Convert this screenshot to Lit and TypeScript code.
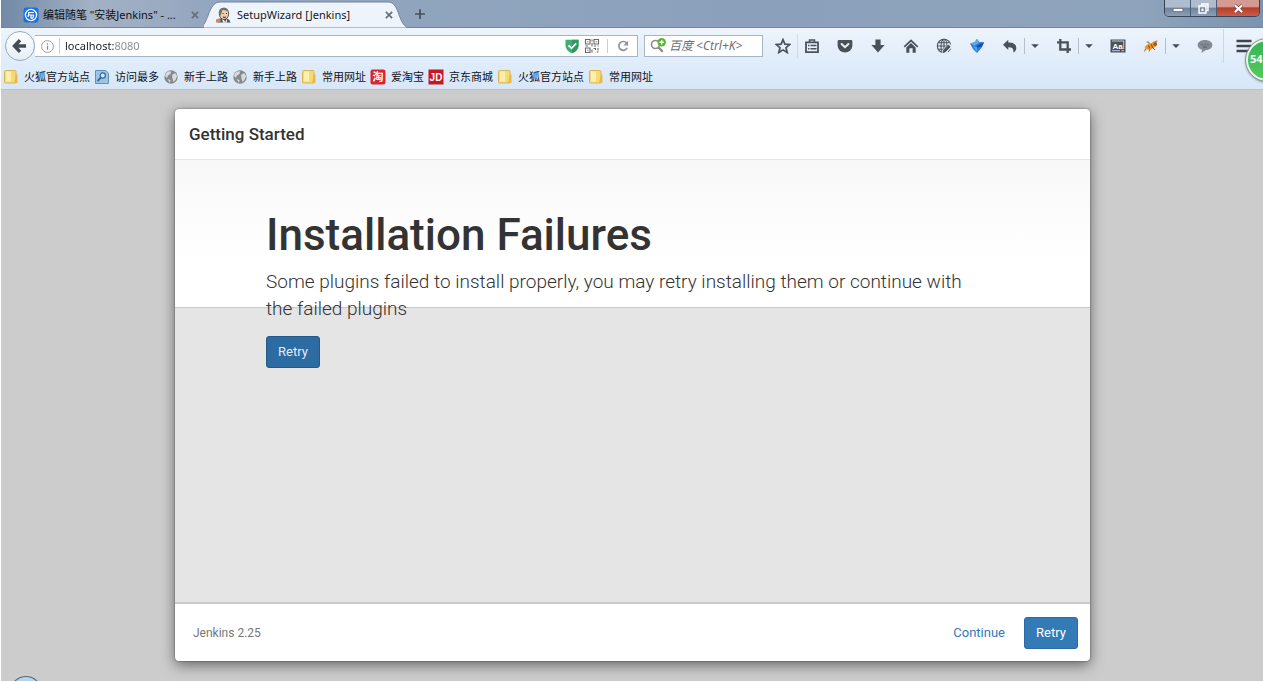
import { LitElement, html, css, svg, TemplateResult } from "lit";
import { customElement } from "lit/decorators.js";

type IconName =
  | "back" | "info" | "shieldCheck" | "qr" | "reload" | "searchAdd" | "star" | "list" | "pocket"
  | "download" | "home" | "globeEdit" | "swirl" | "undo" | "crop" | "reader" | "bee" | "chat"
  | "menu" | "caret" | "folder" | "mostVisited" | "globe" | "taobao" | "jd" | "blog" | "jenkins"
  | "close" | "plus" | "minimize" | "restore" | "winClose";

const ink = "#4b5158";

const shapes: Record<IconName, TemplateResult> = {
  back: svg`<path d="M8 2.2 2.5 8 8 13.8M3.2 8H14" fill="none" stroke="#454c55" stroke-width="3.4"/>`,
  info: svg`<circle cx="8" cy="8" r="6.3" fill="none" stroke="#9a9a9a"/><path d="M8 4.5v1.6M8 7.2v4.3" stroke="#8a8a8a" stroke-width="1.3"/>`,
  shieldCheck: svg`<path d="M1.5 1.800H14.500V8Q14 13 8 15.200 2 13 1.500 8Z" fill="#3fae70"/><path d="M8 1.800h6.500V8Q14 13 8 15.200Z" fill="#2f9a5d"/><path d="m4.500 7.300 3 3 4.700-5" fill="none" stroke="#fff" stroke-width="1.800"/>`,
  qr: svg`<g fill="none" stroke="#666" stroke-width="1.100"><path d="M1.500 1.500h4.500v4.500H1.500zM10 1.500h4.500v4.500H10zM1.500 10h4.500v4.500H1.500z"/><path d="M3.200 3.750h1.200M11.600 3.750h1.200M3.200 12.250h1.200M8 1.500v2M8 5v3.500M1.500 8H4M10 8h2M13.500 8h1M9.500 10.500h2v1.500M14 10v2.500M12.500 14h2M8 11.500v3"/></g>`,
  reload: svg`<path d="M12.200 4.800A5 5 0 1 0 12.800 10" fill="none" stroke="#8f9194" stroke-width="1.900"/><path d="M13.800 2v5.500H8.300z" fill="#8f9194"/>`,
  searchAdd: svg`<circle cx="5.500" cy="6.500" r="4" fill="none" stroke="#8b8b8b" stroke-width="1.600"/><path d="m8.500 9.500 4.200 4.200" stroke="#8b8377" stroke-width="2.200"/><circle cx="11.700" cy="4.300" r="4.200" fill="#53b92c"/><path d="M11.700 2v4.600M9.400 4.300H14" stroke="#fff" stroke-width="1.400"/>`,
  star: svg`<path d="m8 1.600 1.900 4.500 4.800.4-3.700 3.200 1.200 4.800L8 11.900l-4.200 2.600L5 9.700 1.300 6.500l4.800-.4z" fill="none" stroke="${ink}" stroke-width="1.700"/>`,
  list: svg`<path d="M2 4.300h12v9.900H2z" fill="none" stroke="${ink}" stroke-width="1.800"/><path d="M5.500 4V2h5v2" fill="none" stroke="${ink}" stroke-width="1.500"/><path d="M4 7.500h1.500M6.500 7.500H12.500M4 10.800h1.500M6.500 10.800H12.500" stroke="${ink}" stroke-width="1.500"/>`,
  pocket: svg`<path d="M2 2h12q1.400 0 1.400 1.400V7.500a7.400 7 0 0 1-14.800 0V3.400Q.6 2 2 2Z" fill="${ink}"/><path d="M4.600 6 8 9.200 11.400 6" fill="none" stroke="#edf3f9" stroke-width="1.900" stroke-linecap="round"/>`,
  download: svg`<path d="M5.400 1.500h5.200v5.500h4L8 14.500 1.400 7h4z" fill="${ink}"/>`,
  home: svg`<path d="M8 1.200 15.300 8.300 14.200 9.500 8 3.700 1.800 9.500.7 8.300z" fill="${ink}"/><path d="m8 5 4.700 4.500V14.700H9.600V10.300H6.400V14.700H3.300V9.500z" fill="${ink}"/>`,
  globeEdit: svg`<g fill="none" stroke="${ink}" stroke-width="1.100"><circle cx="8" cy="8" r="6.700"/><ellipse cx="8" cy="8" rx="3" ry="6.700"/><path d="M8 1.500v13M1.500 8h13M2.700 4.700h10.600M2.700 11.300h10.600"/></g><path d="m5.500 16 1-4L13 5l3 3v8z" fill="#e2edf8"/><path d="m7 14.500.8-2.500 4.500-5 1.800 1.700-4.700 5zM12 14l2.700-3.200" fill="${ink}" stroke="${ink}"/>`,
  swirl: svg`<path d="M8 1 10.500 4 15 4.200 12.800 9.500 8 15 4 11 1 5.500 5.500 4.300z" fill="#2b7bd3"/><path d="M8 1 10.500 4.500 5.500 7.800 1 5.500 5.500 4.300z" fill="#62a9e8"/><path d="M7.500 8 15 4.200 13 8.500 8.500 9.500z" fill="#164f9f"/><path d="M4 8 8 9.500V14z" fill="#51a8ee"/>`,
  undo: svg`<path d="M6.300 1.700V4.500Q14.300 4.300 14.300 10 14.300 13 11.300 14.500 12.300 9 6.300 9.200V12L1 6.800z" fill="${ink}"/>`,
  crop: svg`<path d="M4.300 1v10.500H15M1 4.300H11.700V15" fill="none" stroke="${ink}" stroke-width="2.300"/>`,
  reader: svg`<path d="M.5 1.500h15v13H.5z" fill="${ink}"/><path d="M2 12.700H10M11.500 12.700H14M2 3h12M13.700 3v8" stroke="#dde7f1" stroke-width=".8"/><text x="7.500" y="10.700" text-anchor="middle" font-family="Liberation Sans" font-weight="700" font-size="8" fill="#fff">Aa</text>`,
  bee: svg`<path d="M3 4Q6 2 7.500 6 11 2 14.500 2.500 14 7 9 7.500z" fill="#b98f58"/><ellipse cx="7.500" cy="8.300" rx="6" ry="2.900" transform="rotate(-18 7.500 8.300)" fill="#f09520"/><path d="m5.500 7.500 1.200 3M8.500 6.500l1 3.200" stroke="#6c3b18"/><path d="M2.500 11 1.500 13.500M7 11 6 13.500M10 10l2 2" stroke="#9c6a31"/><circle cx="12.300" cy="6.300" r="1.700" fill="#a35314"/>`,
  chat: svg`<path d="M8 2c4.300 0 7.400 2.200 7.400 5.100S12.300 12.200 8.500 12.200L4.500 15 5 11.800C2.400 11.100.6 9.400.6 7.100.6 4.200 3.700 2 8 2Z" fill="#858b92"/><path d="M4.300 6.500h1.400M7.300 6.500h1.400M10.300 6.500h1.400M6 9h4" stroke="#62686f" stroke-width="1.300"/>`,
  menu: svg`<path d="M.5 3h15M.5 8h15M.5 13h15" stroke="#3f444c" stroke-width="2.600"/>`,
  caret: svg`<path d="M3 5.500h10L8 10.500z" fill="#454b52"/>`,
  folder: svg`<path d="M2.500 1.500H12q1 0 1 1V14H2.500q-1 0-1-1V2.500q0-1 1-1Z" fill="#f6d978" stroke="#d8b557"/><path d="M3 2.500h5v10H3z" fill="#fff0ac"/><path d="M13 5.500h1.500V14H11z" fill="#e5b94b"/>`,
  mostVisited: svg`<path d="M1.500 1.500h10.300l2.700 2.800V14.500h-13z" fill="#9dc4e2" stroke="#5d90ba"/><circle cx="8.800" cy="6.500" r="2.600" fill="#d5e9f7" stroke="#2f6a9f" stroke-width="1.200"/><path d="m7 8.500-3.500 3.500" stroke="#2f6a9f" stroke-width="1.800"/>`,
  globe: svg`<circle cx="8" cy="8" r="6.700" fill="#85898c"/><path d="M3 4Q5 1.800 8 2.500L7.500 5 5 6.500 4 9 2 7zM9 6l3-2 2.200 3-1.700 4L10.500 13 9.500 9.500zM4.500 10l3 1-.5 3z" fill="#d6dadc"/>`,
  taobao: svg`<rect x=".5" y=".5" width="15" height="15" rx="2" fill="#da2630"/><text x="8" y="12" text-anchor="middle" font-family="Noto Sans CJK SC" font-weight="700" font-size="11" fill="#fff">淘</text>`,
  jd: svg`<rect x=".5" y=".5" width="15" height="15" fill="#c81623"/><text x="8" y="12" text-anchor="middle" font-family="Liberation Sans" font-weight="700" font-size="10" fill="#fff">JD</text>`,
  blog: svg`<rect x=".5" y=".5" width="15" height="15" rx="3" fill="#1671e8"/><circle cx="8" cy="8" r="5.600" fill="none" stroke="#fff" stroke-width="1.300"/><path d="M5 5.500H11M5 8h6M8 8v3.500M10.500 8Q11 11 8 11.500M6 5.500 5 10" fill="none" stroke="#fff" stroke-width="1.200"/>`,
  jenkins: svg`<path d="M1.500 15.500Q2 11.500 6 11l5 .5Q14 12.500 14.500 15.500z" fill="#39566f"/><path d="m6 11.500 3 2.500 2-2v3.500H7z" fill="#f5f5f5"/><path d="m8 13.500 2-1v2.500z" fill="#cf2a2a"/><ellipse cx="8" cy="6.800" rx="4.700" ry="5.600" fill="#edcdb0" stroke="#493b35" stroke-width=".8"/><path d="M3 7.500Q2 1 7.500.7 12 .5 12.500 4.500 9 2.500 6.500 3 5.500 6 4.200 9z" fill="#72706d"/><path d="M6.500 6.500h1M10 6.500h1M7 10q1.500.7 3 0" stroke="#3e2e28"/><path d="M0 12.500 4.500 11v4.500H0z" fill="#c68b66"/>`,
  close: svg`<path d="m3 3 10 10M13 3 3 13" stroke="#66707b" stroke-width="2.700"/>`,
  plus: svg`<path d="M8 1.500v13M1.500 8h13" stroke="#434e5a" stroke-width="2.200"/>`,
  minimize: svg`<path d="M2.500 8.500h11v3.500h-11z" fill="#fff" stroke="#48566a" stroke-width=".7"/>`,
  restore: svg`<path d="M6 4V2.500h7.500v8H12M2.500 5H11v8.500H2.500z" fill="none" stroke="#fff" stroke-width="1.800"/><path d="M5.500 8h2.500v3H5.500z" fill="#fff"/>`,
  winClose: svg`<path d="m3.500 4 9 8.500M12.500 4l-9 8.500" stroke="#5b2a28" stroke-width="4"/><path d="m3.500 4 9 8.500M12.500 4l-9 8.500" stroke="#fff" stroke-width="2.800"/>`,
};

const icon = (name: IconName, size = 16) =>
  html`<svg width=${size} height=${size} viewBox="0 0 16 16" aria-hidden="true">${shapes[name]}</svg>`;

const base = css`
  * { box-sizing: border-box; }
  svg { display: block; flex: none; }
  button, input { font: inherit; color: inherit; margin: 0; padding: 0; border: 0; background: none; }
  a { color: inherit; text-decoration: none; }
  button { display: flex; align-items: center; justify-content: center; flex: none; cursor: pointer; }
`;

@customElement("browser-chrome")
class BrowserChrome extends LitElement {
  static styles = [base, css`
    :host {
      display: block;
      position: relative;
      font-family: "Noto Sans", "Noto Sans CJK SC", sans-serif;
      font-size: 11px;
      line-height: 16px;
      color: #15181c;
    }
    .tabs {
      display: flex;
      height: 28px;
      border-bottom: 1px solid #71879f;
      background: linear-gradient(90deg, #7089a6, #a3b1c5 90px, #93a6bf 210px, #8ba1bb 60%, #8fa4bc 90%, #7c93af);
    }
    .tab { display: flex; align-items: center; height: 28px; padding-top: 1px; }
    .tab span { flex: 1; white-space: nowrap; }
    .idle { width: 203px; padding-left: 22px; padding-right: 4px; gap: 4px; }
    .idle span { color: #0d1218; }
    .active { position: relative; width: 202px; padding-left: 12px; padding-right: 12px; gap: 5px; }
    .shape { position: absolute; inset: 0; z-index: 0; }
    .active > :not(.shape) { position: relative; }
    .add { width: 28px; height: 28px; }
    .window {
      display: flex;
      margin-left: auto;
      margin-right: 3px;
      height: 17px;
      border: 1px solid #35465b;
      border-top: 0;
      border-radius: 0 0 5px 5px;
      overflow: hidden;
    }
    .window button { width: 26px; background: linear-gradient(#aebccd 45%, #6e839e 50%, #8d9fb5); border-right: 1px solid #4b5d74; }
    .window .quit { width: 42px; border: 0; background: linear-gradient(#d59a91 40%, #b53e2c 50%, #cb5d45); }
    .bars { background: linear-gradient(#edf4fc, #dceafa 45px, #d8e7f7); border-bottom: 1px solid #b6c2d1; }
    .nav { display: flex; align-items: center; height: 36px; padding-left: 4px; }
    .back { width: 30px; height: 30px; border: 1px solid #9aa8b7; border-radius: 50%; background: linear-gradient(#fdfeff, #e6eef7); }
    .url, .search { display: flex; align-items: center; height: 22px; background: #fff; border: 1px solid #a7b6c7; }
    .url { flex: 1; min-width: 0; padding-left: 5px; border-left: 0; margin-right: 6px; }
    .url label, .search label { display: flex; align-items: center; flex: 1; min-width: 0; }
    .url input {
      flex: 1;
      min-width: 0;
      height: 16px;
      margin-left: 4px;
      padding-left: 5px;
      border-left: 1px solid #c9ced4;
      background: linear-gradient(90deg, #1b1e22 54px, #85898e 54px);
      -webkit-background-clip: text;
      background-clip: text;
      -webkit-text-fill-color: transparent;
    }
    .url button { width: 20px; height: 20px; }
    .url .reload { width: 30px; height: 14px; margin-left: 5px; border-left: 1px solid #c9ced4; }
    .search { width: 119px; flex: none; padding-left: 5px; margin-right: 6px; }
    .search input { width: 88px; margin-left: 3px; font-size: 12px; }
    .search input::placeholder { color: #6c7075; font-style: italic; opacity: 1; }
    .tool { width: 33px; height: 24px; }
    .narrow { width: 28px; }
    .listing { border-left: 1px solid #d2dae3; margin-right: 3px; }
    .combo { display: flex; margin: 0 3px; }
    .caret { width: 20px; height: 16px; margin-top: 4px; border-left: 1px solid #b7c0ca; }
    .menu { width: 40px; height: 34px; margin-left: 2px; border-left: 1px solid #ccd7e3; }
    .marks { display: flex; align-items: center; height: 25px; padding-left: 2px; gap: 4px; }
    .mark { display: flex; align-items: center; gap: 5px; white-space: nowrap; color: #10131a; }
    .badge {
      position: absolute;
      top: 39px;
      left: calc(100% - 17px);
      width: 42px;
      height: 42px;
      padding: 12px 0 0 2px;
      border: 2px solid #e7f4ea;
      border-radius: 50%;
      outline: 1px solid #8f9a95;
      background: linear-gradient(#37b356, #52cc5b);
      color: #fff;
      font-weight: 700;
      line-height: 12px;
      box-shadow: 0 1px 3px #5d6670;
    }
  `];

  private marks: [IconName, string][] = [
    ["folder", "火狐官方站点"], ["mostVisited", "访问最多"], ["globe", "新手上路"], ["globe", "新手上路"],
    ["folder", "常用网址"], ["taobao", "爱淘宝"], ["jd", "京东商城"], ["folder", "火狐官方站点"], ["folder", "常用网址"],
  ];

  private tool(name: IconName, label: string, extra = "") {
    return html`<button class="tool ${extra}" aria-label=${label}>${icon(name)}</button>`;
  }

  private combo(name: IconName, label: string) {
    return html`<div class="combo">
      ${this.tool(name, label, "narrow")}
      <button class="caret" aria-label="${label} options">${icon("caret", 12)}</button>
    </div>`;
  }

  render() {
    return html`
      <div class="tabs">
        <div class="tab idle">
          ${icon("blog")}<span>编辑随笔 "安装Jenkins" - ...</span>
          <button aria-label="Close tab">${icon("close", 10)}</button>
        </div>
        <div class="tab active">
          <svg class="shape" width="202" height="28" viewBox="0 0 202 28" aria-hidden="true">
            <path d="M-6 28C5 28 3 2 16 2H184C197 2 193 28 207 28Z" fill="#edf4fc" stroke="#73869b"/>
          </svg>
          ${icon("jenkins")}<span>SetupWizard [Jenkins]</span>
          <button aria-label="Close tab">${icon("close", 10)}</button>
        </div>
        <button class="add" aria-label="New tab">${icon("plus", 12)}</button>
        <div class="window">
          <button aria-label="Minimize">${icon("minimize", 14)}</button>
          <button aria-label="Restore">${icon("restore", 13)}</button>
          <button class="quit" aria-label="Close window">${icon("winClose", 13)}</button>
        </div>
      </div>
      <div class="bars">
        <div class="nav">
          <button class="back" aria-label="Back">${icon("back")}</button>
          <div class="url">
            <label>${icon("info", 15)}<input aria-label="Address" value="localhost:8080" /></label>
            <button aria-label="Site security">${icon("shieldCheck")}</button>
            <button aria-label="QR code">${icon("qr")}</button>
            <button class="reload" aria-label="Reload">${icon("reload", 14)}</button>
          </div>
          <div class="search">
            <label>${icon("searchAdd")}<input aria-label="Search" placeholder="百度 <Ctrl+K>" /></label>
          </div>
          ${this.tool("star", "Bookmark", "narrow")}
          ${this.tool("list", "Bookmarks list", "narrow listing")}
          ${this.tool("pocket", "Pocket")}
          ${this.tool("download", "Downloads")}
          ${this.tool("home", "Home")}
          ${this.tool("globeEdit", "Edit page")}
          ${this.tool("swirl", "Accelerator")}
          ${this.combo("undo", "Undo close")}
          ${this.combo("crop", "Screenshot")}
          ${this.tool("reader", "Dictionary")}
          ${this.combo("bee", "Debugger")}
          ${this.tool("chat", "Chat")}
          <button class="menu" aria-label="Menu">${icon("menu")}</button>
        </div>
        <nav class="marks">
          ${this.marks.map(([name, label]) => html`<a class="mark" href="#">${icon(name)}${label}</a>`)}
        </nav>
      </div>
      <div class="badge">54</div>
    `;
  }
}

@customElement("setup-wizard")
class SetupWizard extends LitElement {
  static styles = [base, css`
    :host {
      display: flex;
      flex-direction: column;
      border-radius: 4px;
      background: #fff;
      box-shadow: 0 4px 14px rgba(0, 0, 0, 0.5), 0 0 2px rgba(0, 0, 0, 0.5);
      font-family: Roboto, sans-serif;
      font-size: 13px;
      line-height: 18px;
      color: #333;
    }
    h1, h4, p { margin: 0; }
    h4 { padding: 14px; font-size: 17px; line-height: 22px; font-weight: 500; border-bottom: 1px solid #e5e5e5; }
    .body {
      flex: 1;
      padding: 48px 108px 20px 91px;
      background:
        linear-gradient(#f8f8f8, rgba(255, 255, 255, 0) 100px) no-repeat,
        linear-gradient(#fff 147px, #c9c9c9 147px, #c9c9c9 148px, #e5e5e5 148px);
      border-bottom: 2px solid #c9c9c9;
    }
    h1 { font-size: 44px; line-height: 54px; font-weight: 500; }
    p { padding-top: 6px; font-size: 19px; line-height: 27px; font-weight: 300; }
    .primary { width: 54px; height: 32px; border: 1px solid #2b6aa6; border-radius: 3px; background: #337ab7; color: #fff; }
    .focused { margin-top: 14px; background: #2d6ca2; border-color: #24578a; color: #e2ebf3; }
    .footer { display: flex; align-items: center; padding: 13px 12px 12px 18px; }
    .version { flex: 1; color: #777; font-size: 12px; }
    .link { margin-right: 19px; color: #337ab7; }
  `];

  render() {
    return html`
      <h4>Getting Started</h4>
      <div class="body">
        <h1>Installation Failures</h1>
        <p>Some plugins failed to install properly, you may retry installing them or continue with the failed plugins</p>
        <button class="primary focused">Retry</button>
      </div>
      <div class="footer">
        <span class="version">Jenkins 2.25</span>
        <button class="link">Continue</button>
        <button class="primary">Retry</button>
      </div>
    `;
  }
}

@customElement("app-root")
class AppRoot extends LitElement {
  static styles = css`
    :host {
      display: flex;
      flex-direction: column;
      box-sizing: border-box;
      min-height: 100vh;
      border-left: 1px solid #fff;
      border-bottom: 1px solid #fff;
      background: #ccc;
      overflow: hidden;
      position: relative;
    }
    setup-wizard { flex: 1; margin: 19px 173px 20px 174px; }
    .peek {
      position: absolute;
      left: 10px;
      bottom: -23px;
      width: 30px;
      height: 28px;
      box-sizing: border-box;
      border: 1px solid #53677c;
      border-radius: 50%;
      background: #b9d3e8;
    }
  `;

  render() {
    return html`
      <browser-chrome></browser-chrome>
      <setup-wizard></setup-wizard>
      <div class="peek"></div>
    `;
  }
}
